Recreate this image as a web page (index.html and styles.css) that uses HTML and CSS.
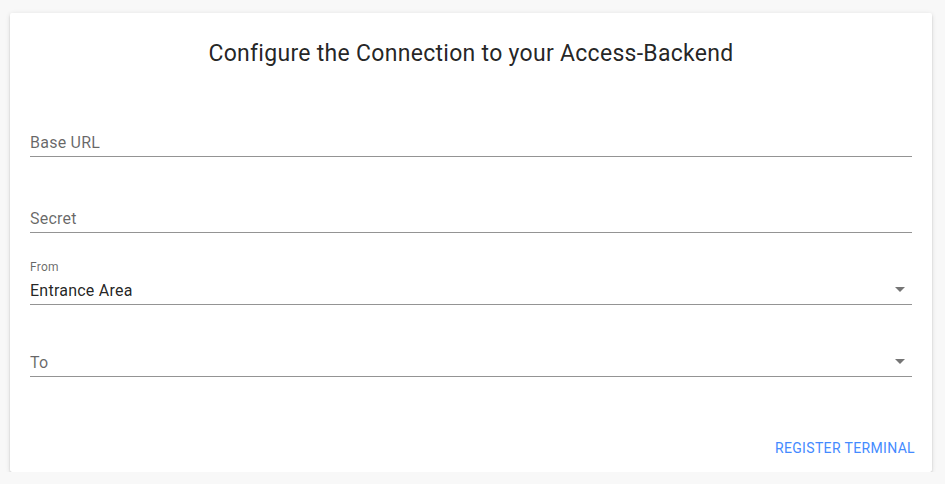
FILE: index.html
```html
<!DOCTYPE html>
<html lang="en">
<head>
<meta charset="utf-8">
<title>Configure Connection</title>
<link rel="stylesheet" href="styles.css">
</head>
<body>
<div class="card">
  <h1 class="card-title">Configure the Connection to your Access-Backend</h1>
  <form class="form">
    <div class="field field-first">
      <div class="label-slot"></div>
      <div class="control"><span class="placeholder">Base URL</span></div>
    </div>
    <div class="field">
      <div class="label-slot"></div>
      <div class="control"><span class="placeholder">Secret</span></div>
    </div>
    <div class="field">
      <div class="label-slot"><span class="float-label">From</span></div>
      <div class="control select"><span class="value">Entrance Area</span>
        <svg class="caret" width="24" height="24" viewBox="0 0 24 24"><path d="M7 10l5 5 5-5z" fill="rgba(0,0,0,0.54)"/></svg>
      </div>
    </div>
    <div class="field">
      <div class="label-slot"></div>
      <div class="control select"><span class="placeholder">To</span>
        <svg class="caret" width="24" height="24" viewBox="0 0 24 24"><path d="M7 10l5 5 5-5z" fill="rgba(0,0,0,0.54)"/></svg>
      </div>
    </div>
  </form>
  <div class="card-actions">
    <button type="button" class="btn">Register Terminal</button>
  </div>
</div>
</body>
</html>
```
FILE: styles.css
```css
html, body {
  margin: 0;
  padding: 0;
}
body {
  background: #f8f8f8;
  font-family: Roboto, "Liberation Sans", Arial, sans-serif;
  padding: 13px 13px 0 10px;
}
.card {
  background: #fff;
  height: 459px;
  box-sizing: border-box;
  display: flex;
  flex-direction: column;
  box-shadow: 0 3px 1px -2px rgba(0,0,0,.2), 0 2px 2px 0 rgba(0,0,0,.14), 0 1px 5px 0 rgba(0,0,0,.12);
  border-radius: 2px;
}
.card-title {
  margin: 0;
  padding: 25px 16px 0;
  font-size: 23px;
  line-height: 32px;
  font-weight: 400;
  text-align: center;
  color: rgba(0,0,0,.87);
  letter-spacing: .0125em;
}
.form {
  display: flex;
  flex-direction: column;
  gap: 26px;
  padding: 41px 20px 0;
}
.field-first {
  margin-bottom: 4px;
}
.label-slot {
  height: 16px;
  margin-bottom: 1px;
  font-size: 12px;
  line-height: 16px;
  color: rgba(0,0,0,.6);
  letter-spacing: .02em;
}
.control {
  height: 28px;
  line-height: 30px;
  font-size: 16px;
  letter-spacing: .015em;
  border-bottom: 1px solid rgba(0,0,0,.42);
  display: flex;
  align-items: flex-start;
  justify-content: space-between;
}
.placeholder {
  color: rgba(0,0,0,.6);
}
.value {
  color: rgba(0,0,0,.87);
}
.caret {
  display: block;
  align-self: center;
  margin-top: -2px;
}
.card-actions {
  margin-top: auto;
  display: flex;
  justify-content: flex-end;
  padding: 8px 9px 6px;
}
.btn {
  background: transparent;
  border: 0;
  height: 36px;
  padding: 0 8px;
  font-family: inherit;
  font-size: 14px;
  font-weight: 400;
  letter-spacing: .35px;
  text-transform: uppercase;
  color: #448aff;
  cursor: pointer;
}
```
